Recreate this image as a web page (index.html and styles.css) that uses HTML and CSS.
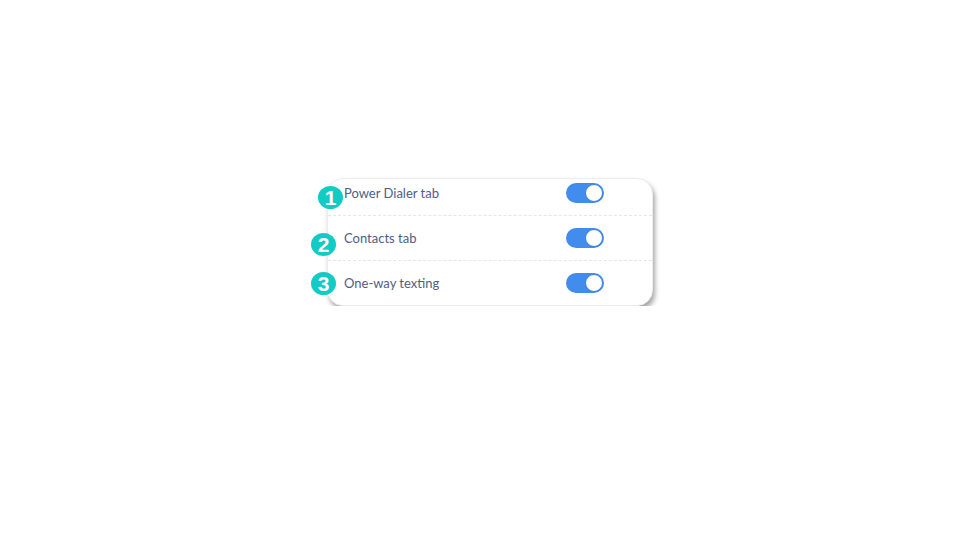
FILE: index.html
```html
<!DOCTYPE html>
<html lang="en">
<head>
    <meta charset="UTF-8">
    <meta name="viewport" content="width=device-width, initial-scale=1.0">
    <title>Tab Settings</title>
    <link rel="stylesheet" href="styles.css">
</head>
<body>
    <div class="settings-card">
        <div class="setting-row row-first">
            <span class="step-badge badge-one">1</span>
            <span class="setting-label">Power Dialer tab</span>
            <span class="toggle"><span class="toggle-knob"></span></span>
        </div>
        <div class="setting-row row-second">
            <span class="step-badge badge-two">2</span>
            <span class="setting-label">Contacts tab</span>
            <span class="toggle"><span class="toggle-knob"></span></span>
        </div>
        <div class="setting-row row-third">
            <span class="step-badge badge-three">3</span>
            <span class="setting-label">One-way texting</span>
            <span class="toggle"><span class="toggle-knob"></span></span>
        </div>
    </div>
</body>
</html>
```

FILE: styles.css
```css
body {
    font-family: Lato, "Open Sans", Arial, sans-serif;
    margin: 0;
    padding: 0;
    background-color: #fff;
}

.settings-card {
    width: 324px;
    margin: 178px 0 0 327px;
    background-color: #fff;
    border: 1px solid #ececec;
    border-radius: 16px;
    box-shadow: 2px 4px 5px rgba(0, 0, 0, 0.35);
}

.setting-row {
    position: relative;
    display: flex;
    align-items: center;
    padding: 0 48px 0 16px;
    border-bottom: 1px dashed #e6e6e6;
}

.setting-row:last-child {
    border-bottom: none;
}

.row-first {
    height: 37px;
    padding-bottom: 8px;
    box-sizing: border-box;
}

.row-second {
    height: 44px;
}

.row-third {
    height: 44px;
}

.setting-label {
    flex: 1;
    font-size: 13px;
    color: #4f5d85;
}

.toggle {
    width: 38px;
    height: 20px;
    border-radius: 10px;
    background-color: #428ced;
    display: flex;
    align-items: center;
    justify-content: flex-end;
    padding: 0 1px;
    box-sizing: border-box;
}

.toggle-knob {
    width: 18px;
    height: 18px;
    border-radius: 50%;
    background-color: #fff;
    box-sizing: border-box;
    border: 1px solid #3a7fe0;
}

.step-badge {
    position: absolute;
    width: 25px;
    height: 23px;
    border-radius: 50%;
    background-color: #12cbc4;
    color: #fff;
    font-family: "Liberation Sans", Arial, sans-serif;
    font-weight: bold;
    font-size: 21px;
    line-height: 23px;
    text-align: center;
}

.badge-one {
    left: -10px;
    top: 7px;
}

.badge-two {
    left: -17px;
    top: 17px;
}

.badge-three {
    left: -17px;
    top: 11px;
}
```
